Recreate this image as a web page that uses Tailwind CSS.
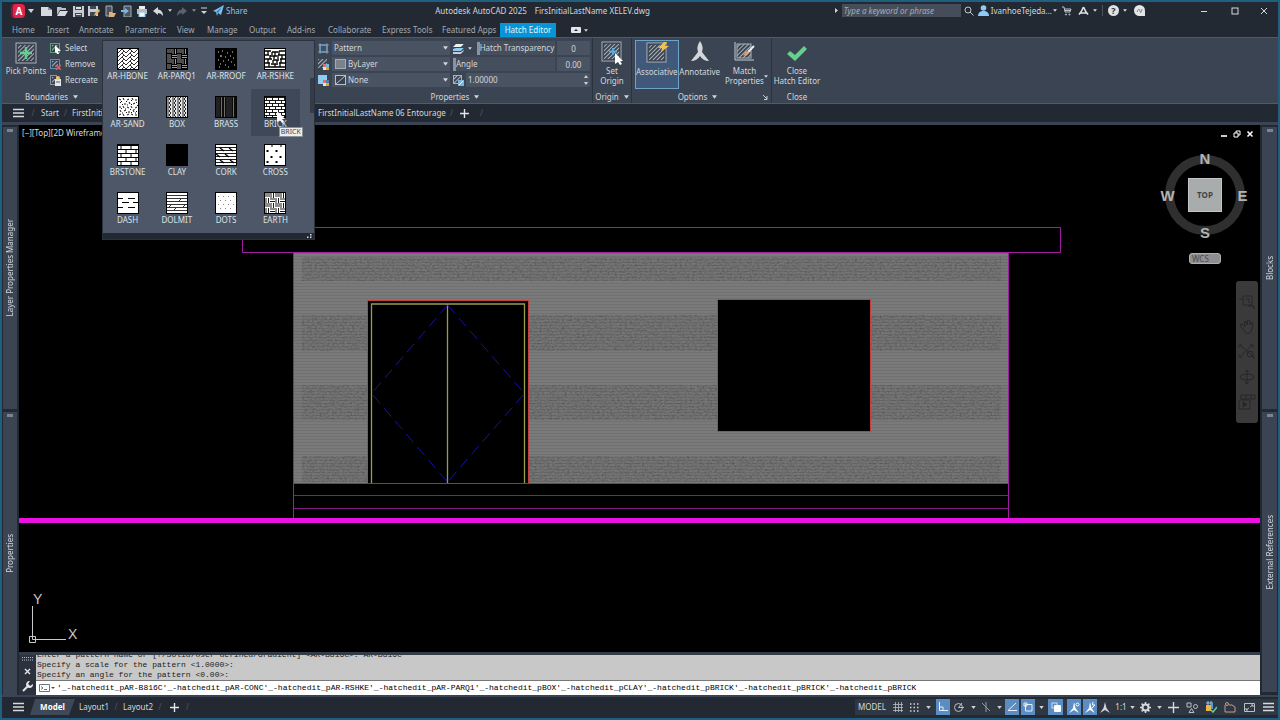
<!DOCTYPE html>
<html lang="en">
<head>
<meta charset="utf-8">
<meta name="viewport" content="width=device-width, initial-scale=1">
<title>Autodesk AutoCAD 2025</title>
<script src="https://cdn.jsdelivr.net/npm/@tailwindcss/browser@4"></script>
</head>
<body class="flex h-screen flex-col overflow-hidden border-x-2 border-t-2 border-[#1f6080] bg-[#222933] font-['Noto_Sans',sans-serif] text-[8px] leading-[10px] text-[#d3d7dc]">

<!-- shared symbols -->
<svg class="absolute h-0 w-0" aria-hidden="true">
  <defs>
    <symbol id="down" viewBox="0 0 6 4"><path d="M0 0H6L3 4Z" fill="#d0d4da"/></symbol>
    <pattern id="diag" width="3" height="3" patternUnits="userSpaceOnUse" patternTransform="rotate(45)"><path d="M0 0V3" stroke="#aab1ba" stroke-width="2"/></pattern>
    <symbol id="hatch" viewBox="0 0 22 22"><rect x="1" y="1" width="20" height="20" fill="#3b4350" stroke="#aab1ba"/><rect x="3" y="3" width="16" height="16" fill="url(#diag)"/></symbol>
    <symbol id="cursor" viewBox="0 0 8 12"><path d="M0 0L8 8H5L7 11L5 12L3 9L0 11Z" fill="#fff"/></symbol>
  </defs>
</svg>

<!-- title bar -->
<header class="flex h-[19px] shrink-0 items-center pb-[2px] pl-[9px]">
  <nav class="flex items-center" aria-label="Quick access">
    <button class="flex h-[14px] w-[14px] items-center justify-center rounded-sm border-l-2 border-[#8f1733] bg-[#e2234c] text-[10px] font-bold text-white" aria-label="Application menu">A</button>
    <svg class="ml-[3px] w-[6px] h-[4px]"><use href="#down"/></svg>
    <button class="ml-[4px] w-4" aria-label="New"><svg class="mx-auto h-3 w-3" viewBox="0 0 12 12"><path d="M1 2H8L12 5V11H1Z" fill="#d6d9dd"/><path d="M8 2V5H12" fill="#8b929c"/></svg></button>
    <button class="w-4" aria-label="Open"><svg class="mx-auto h-3 w-3" viewBox="0 0 12 12"><path d="M1 10V2H5L6 3H10V5H4Z" fill="#b9bfc6"/><path d="M4 6H12L9 11H1Z" fill="#d6d9dd"/></svg></button>
    <button class="w-4" aria-label="Save"><svg class="mx-auto h-3 w-3" viewBox="0 0 12 12"><path d="M1 1H12V12H1Z" fill="#c9cdd2"/><path d="M3 1H10V5H3ZM3 8H10V12H3Z" fill="#3f4651"/><path d="M4 2H9V4H4ZM4 9H9V10H4Z" fill="#dfe2e5"/></svg></button>
    <button class="w-4" aria-label="Save as"><svg class="mx-auto h-3 w-3" viewBox="0 0 12 12"><path d="M0 1H10V11H0Z" fill="#c9cdd2"/><path d="M2 1H8V4H2ZM2 7H8V11H2Z" fill="#3f4651"/><path d="M6 11L7 8L11 4L12 6L8 10Z" fill="#e8b35e"/></svg></button>
    <button class="w-4" aria-label="Open from mobile"><svg class="mx-auto h-3 w-3" viewBox="0 0 12 12"><path d="M2 1H8V11H2Z" fill="#4a5260" stroke="#a9afb7"/><path d="M5 11V7H8L9 8H12L10 12H5Z" fill="#e0b27a"/></svg></button>
    <button class="w-4" aria-label="Save to mobile"><svg class="mx-auto h-3 w-3" viewBox="0 0 12 12"><path d="M4 1H11V12H4Z" fill="#4a5260" stroke="#a9afb7"/><path d="M1 5H5V3L9 6L5 9V7H1Z" fill="#6fb9ec"/></svg></button>
    <button class="w-4" aria-label="Plot"><svg class="mx-auto h-3 w-3" viewBox="0 0 12 12"><path d="M3 1H9V4H3Z" fill="#eceef0"/><path d="M1 4H11V9H1Z" fill="#b7bcc3"/><path d="M3 7H9V12H3Z" fill="#f4f5f6" stroke="#8cc4ec"/></svg></button>
    <button class="w-4" aria-label="Undo"><svg class="mx-auto h-3 w-3" viewBox="0 0 12 12"><path d="M1 6L6 2V4.500Q11 5 11 11Q9 8 6 8V10Z" fill="#d6d9dd"/></svg></button>
    <svg class="mx-[2px] h-[3px] w-[4px]"><use href="#down"/></svg>
    <button class="w-4" aria-label="Redo"><svg class="mx-auto h-3 w-3" viewBox="0 0 12 12"><path d="M11 6L6 2V4.500Q1 5 1 11Q3 8 6 8V10Z" fill="#5a626e"/></svg></button>
    <svg class="mx-[2px] h-[3px] w-[4px] opacity-60"><use href="#down"/></svg>
    <button class="w-3" aria-label="Customize"><svg class="mx-auto h-2 w-[6px]" viewBox="0 0 6 8"><path d="M0 1H6" stroke="#d0d4da"/><path d="M0 4H6L3 7Z" fill="#d0d4da"/></svg></button>
    <a href="#" class="ml-[3px] flex items-center gap-[2px] text-[#8fc4e8]"><svg class="h-[11px] w-[11px]" viewBox="0 0 11 11"><path d="M0 6L11 0L8 10L5 8L4 11L3 7Z" fill="#7cc0ee"/><path d="M3 7L9 2L5 8" fill="#3d7fae"/></svg>Share</a>
  </nav>
  <div class="flex min-w-0 flex-1 justify-center gap-2 pl-[3px] text-[#d3d7dc]"><span>Autodesk AutoCAD 2025</span><span>FirsInitialLastName XELEV.dwg</span></div>
  <div class="flex items-center">
    <svg class="mr-[4px] h-[5px] w-[3px]" viewBox="0 0 3 5"><path d="M0 0L3 2.500L0 5Z" fill="#d0d4da"/></svg>
    <input aria-label="Search" placeholder="Type a keyword or phrase" class="h-[13px] w-[119px] bg-[#454d5b] px-[2px] text-[8px] italic placeholder:text-[#a6acb5]">
    <button class="w-[17px]" aria-label="Find"><svg class="mx-auto h-[10px] w-[10px]" viewBox="0 0 10 10" fill="none" stroke="#c3c8ce"><circle cx="4" cy="4" r="3"/><path d="M6 6L9.500 9.500"/></svg></button>
    <button class="flex items-center gap-[2px]"><svg class="h-[11px] w-[11px]" viewBox="0 0 11 11" fill="#8ecbf5"><circle cx="5.500" cy="3" r="2.800"/><path d="M0 11Q0 7 4 6H7Q11 7 11 11Z"/></svg>IvanhoeTejeda...</button>
    <svg class="ml-px h-[3px] w-[4px]"><use href="#down"/></svg>
    <button class="ml-[2px] w-4" aria-label="Store"><svg class="mx-auto h-[10px] w-[10px]" viewBox="0 0 10 10" fill="none" stroke="#bfc4ca"><path d="M0 1H2L3 6H8L9 3H3M3 4.500H8"/><circle cx="4" cy="8.500" r=".6"/><circle cx="7.500" cy="8.500" r=".6"/></svg></button>
    <button class="w-4" aria-label="App menu"><svg class="mx-auto h-[10px] w-[11px]" viewBox="0 0 11 10" fill="none" stroke="#dfe2e5" stroke-width="1.600"><path d="M5.500 1L3 6L1 8.500M5.500 1L8 6L10 8.500M3 7H8"/></svg></button>
    <svg class="mx-[2px] h-[3px] w-[4px]"><use href="#down"/></svg>
    <span class="ml-[3px] mr-[5px] h-[11px] w-px bg-[#4a515c]"></span>
    <button class="flex h-[11px] w-[11px] items-center justify-center rounded-full bg-[#dfe2e5] text-[9px] font-bold text-[#2b323d]" aria-label="Help">?</button>
    <svg class="mx-[4px] h-[3px] w-[4px]"><use href="#down"/></svg>
    <button class="w-4" aria-label="Assistant"><svg class="mx-auto h-[11px] w-[11px]" viewBox="0 0 11 11"><path d="M5.500 0A5.500 5.500 0 0 1 11 5.500V11H5.500A5.500 5.500 0 0 1 5.500 0Z" fill="#e3e5e8"/><path d="M3 7Q5 2 6 6T8 4" fill="none" stroke="#808892"/></svg></button>
    <button class="ml-[41px] w-[31px]" aria-label="Minimize"><svg class="mx-auto h-2 w-2" viewBox="0 0 8 8"><path d="M1 4.500H7" stroke="#d6d9dd"/></svg></button>
    <button class="w-[31px]" aria-label="Maximize"><svg class="mx-auto h-2 w-2" viewBox="0 0 8 8"><rect x="1" y="1" width="6" height="6" fill="none" stroke="#d6d9dd"/></svg></button>
    <button class="w-[28px]" aria-label="Close window"><svg class="mx-auto h-2 w-2" viewBox="0 0 8 8"><path d="M1 1L7 7M7 1L1 7" stroke="#d6d9dd"/></svg></button>
  </div>
</header>

<!-- ribbon tabs -->
<nav class="flex h-4 shrink-0 items-end pl-[10px] text-[#a3a9b2]" aria-label="Ribbon tabs">
  <button class="h-[14px] w-[35px] text-left">Home</button><button class="h-[14px] w-[32px] text-left">Insert</button><button class="h-[14px] w-[46px] text-left">Annotate</button><button class="h-[14px] w-[52px] text-left">Parametric</button><button class="h-[14px] w-[30px] text-left">View</button><button class="h-[14px] w-[42px] text-left">Manage</button><button class="h-[14px] w-[38px] text-left">Output</button><button class="h-[14px] w-[41px] text-left">Add-ins</button><button class="h-[14px] w-[54px] text-left">Collaborate</button><button class="h-[14px] w-[60px] whitespace-nowrap text-left">Express Tools</button><button class="h-[14px] w-[58px] whitespace-nowrap text-left">Featured Apps</button>
  <button class="h-[14px] w-[56px] whitespace-nowrap bg-[#0696d7] text-[#e3f3fb]">Hatch Editor</button>
  <button class="ml-[15px] flex h-[14px] items-center gap-[3px]" aria-label="Ribbon display"><svg class="h-[6px] w-[10px]" viewBox="0 0 10 6"><rect width="10" height="6" rx="1" fill="#e3e5e8"/><path d="M3 4L5 2L7 4Z" fill="#222933"/></svg><svg class="h-[3px] w-[4px]"><use href="#down"/></svg></button>
</nav>

<!-- ribbon -->
<section class="relative flex h-[67px] shrink-0 border-y border-[#2d6781] bg-[#3b4453]" aria-label="Hatch Editor">
  <div class="flex w-[99px] flex-col">
    <div class="flex h-[54px]">
      <button class="flex w-[48px] flex-col items-center justify-start whitespace-nowrap pt-[4px]"><span class="relative mb-[2px]"><svg class="h-[22px] w-[22px]"><use href="#hatch"/></svg><svg class="absolute inset-0 h-[22px] w-[22px]" viewBox="0 0 22 22"><path d="M11 5V17M5 11H17" stroke="#5fd38d" stroke-width="2.400"/></svg></span>Pick Points</button>
      <div class="flex flex-col pt-[2px]">
        <button class="flex h-4 items-center gap-[4px]"><svg class="h-[11px] w-[11px]" viewBox="0 0 11 11"><rect x=".5" y=".5" width="9" height="9" fill="#33483f" stroke="#5f9e7b"/><rect x="2" y="2" width="6" height="6" fill="url(#diag)"/><path d="M5 2L11 8H8L9 11H7L6 9L5 10Z" fill="#fff"/></svg>Select</button>
        <button class="flex h-4 items-center gap-[4px]"><svg class="h-[11px] w-[11px]" viewBox="0 0 11 11"><rect x=".5" y=".5" width="9" height="9" fill="#34465a" stroke="#6d8ba6"/><rect x="2" y="2" width="6" height="6" fill="url(#diag)"/><path d="M6 6L11 11M11 6L6 11" stroke="#e25c56" stroke-width="1.500"/></svg>Remove</button>
        <button class="flex h-4 items-center gap-[4px]"><svg class="h-[11px] w-[11px]" viewBox="0 0 11 11"><rect x=".5" y=".5" width="6" height="9" fill="#39424f" stroke="#8d96a2"/><rect x="2" y="2" width="3" height="6" fill="url(#diag)"/><path d="M5 4H11V11H5Z" fill="#e4e6e8"/><circle cx="8" cy="3" r="2" fill="#f0c36a"/><path d="M6 7H10" stroke="#57606d"/></svg>Recreate</button>
      </div>
    </div>
    <div class="flex items-center justify-center gap-[5px]">Boundaries<svg class="h-[4px] w-[5px]"><use href="#down"/></svg></div>
  </div>

  <div class="ml-[213px] flex w-[279px] flex-col border-r border-[#2c333f] pl-[4px] pt-[2px]">
    <div class="grid h-[52px] auto-rows-[16px] grid-cols-[132px_137px] gap-x-[3px]">
      <div class="flex h-4 items-center gap-[3px]"><svg class="h-[11px] w-[11px] shrink-0" viewBox="0 0 11 11"><rect x="2" y="2" width="7" height="7" fill="#33546b" stroke="#7fb4d8"/><path d="M2 0V11M9 0V11M0 2H11M0 9H11" stroke="#8fa6b8" stroke-width=".7"/></svg>
        <label class="relative flex h-[14px] flex-1 items-center bg-[#4a5362]"><select aria-label="Hatch type" class="w-full appearance-none bg-transparent pl-[2px]"><option>Pattern</option></select><svg class="pointer-events-none absolute right-[2px] h-[4px] w-[5px]"><use href="#down"/></svg></label></div>
      <div class="flex h-4 items-center"><svg class="h-[11px] w-[11px]" viewBox="0 0 11 11"><path d="M3 1H11L8 4H0Z" fill="#eef0f2"/><path d="M0 6L3 5H11L8 8H0Z" fill="#8ecbf5"/><path d="M0 9H8L11 7V8L8 11H0Z" fill="#c9cdd2"/></svg><svg class="ml-[4px] h-[3px] w-[4px]"><use href="#down"/></svg>
        <div class="ml-[5px] flex h-[14px] w-[80px] items-center whitespace-nowrap bg-[#454e5c]"><span class="h-[13px] w-[3px] shrink-0 bg-[#8b929d]"></span>Hatch Transparency</div>
        <input aria-label="Hatch transparency" value="0" class="ml-[2px] h-[14px] w-[33px] bg-[#4a5362] text-center"></div>
      <div class="flex h-4 items-center gap-[3px]"><svg class="h-[11px] w-[11px] shrink-0" viewBox="0 0 11 11"><rect width="9" height="9" fill="url(#diag)"/><path d="M5 5H8V8H5Z" fill="#e46b5e"/><path d="M8 5H11V8H8Z" fill="#7fb4d8"/><path d="M5 8H8V11H5Z" fill="#dfe2e5"/><path d="M8 8H11V11H8Z" fill="#d9a441"/></svg>
        <label class="relative flex h-[14px] flex-1 items-center gap-[2px] bg-[#4a5362] pl-[3px]"><span class="h-[10px] w-[11px] shrink-0 border border-[#a5abb3] bg-[#7b8289]"></span><select aria-label="Hatch color" class="w-full appearance-none bg-transparent"><option>ByLayer</option></select><svg class="pointer-events-none absolute right-[2px] h-[4px] w-[5px]"><use href="#down"/></svg></label></div>
      <div class="flex h-4 items-center"><div class="flex h-[14px] w-[102px] items-center bg-[#454e5c]"><span class="h-[13px] w-[3px] bg-[#8b929d]"></span>Angle</div>
        <input aria-label="Angle" value="0.00" class="ml-[2px] h-[14px] w-[33px] bg-[#4a5362] text-center"></div>
      <div class="flex h-4 items-center gap-[3px]"><svg class="h-[11px] w-[11px] shrink-0" viewBox="0 0 11 11"><rect width="9" height="9" fill="#8ecbf5"/><path d="M5 5H8V8H5Z" fill="#e46b5e"/><path d="M8 5H11V8H8Z" fill="#4b83aa"/><path d="M5 8H8V11H5Z" fill="#dfe2e5"/><path d="M8 8H11V11H8Z" fill="#d9a441"/></svg>
        <label class="relative flex h-[14px] flex-1 items-center gap-[2px] bg-[#4a5362] pl-[3px]"><svg class="h-[10px] w-[11px] shrink-0" viewBox="0 0 11 10" fill="#39424f" stroke="#b9bfc6"><rect x=".5" y=".5" width="10" height="9"/><path d="M1 9L10 1"/></svg><select aria-label="Background color" class="w-full appearance-none bg-transparent"><option>None</option></select><svg class="pointer-events-none absolute right-[2px] h-[4px] w-[5px]"><use href="#down"/></svg></label></div>
      <div class="flex h-4 items-center"><svg class="h-[11px] w-[11px]" viewBox="0 0 11 11"><rect x=".5" y=".5" width="8" height="8" fill="url(#diag)" stroke="#aab1ba"/><path d="M5 5H11V11H5Z" fill="#7fb4d8"/><path d="M6 10L10 6" stroke="#fff"/></svg>
        <div class="ml-[2px] flex h-[14px] w-[124px] items-center bg-[#4a5362]"><input aria-label="Hatch scale" value="1.00000" class="min-w-0 flex-1 bg-transparent pl-[2px]"><svg class="mr-px h-3 w-[6px]" viewBox="0 0 6 12"><path d="M1 4L3 1L5 4ZM1 8H5L3 11Z" fill="#d0d4da"/></svg></div></div>
    </div>
    <div class="flex items-center justify-center gap-[5px]">Properties<svg class="h-[4px] w-[5px]"><use href="#down"/></svg></div>
  </div>

  <div class="flex w-[39px] flex-col items-center border-r border-[#2c333f]">
    <button class="flex h-[54px] flex-col items-center justify-start pt-[3px]"><span class="relative mb-1"><svg class="h-[21px] w-[21px]"><use href="#hatch"/></svg><svg class="absolute inset-0 h-[21px] w-[21px]" viewBox="0 0 21 21"><path d="M12 7V14M8 10.500H16" stroke="#5ba8e0" stroke-width="2"/></svg><svg class="absolute -bottom-[3px] -right-px h-3 w-2"><use href="#cursor"/></svg></span>Set<br>Origin</button>
    <div class="flex items-center gap-[5px]">Origin<svg class="h-[4px] w-[5px]"><use href="#down"/></svg></div>
  </div>

  <div class="flex w-[140px] flex-col border-r border-[#2c333f] px-[3px]">
    <div class="flex h-[54px] pt-[2px]">
      <button class="flex h-[49px] w-[44px] flex-col items-center justify-start border border-[#6da3c8] bg-[#40597a] pt-px" aria-pressed="true"><span class="relative mb-1"><svg class="h-[21px] w-[21px]"><use href="#hatch"/></svg><svg class="absolute -right-[2px] top-0 h-[10px] w-[11px]" viewBox="0 0 11 10"><path d="M6 0L0 6H4L3 10L11 4H7L9 0Z" fill="#f2c14e"/></svg></span>Associative</button>
      <button class="flex w-[43px] flex-col items-center justify-start pt-px"><svg class="mb-[5px] h-[21px] w-[20px]" viewBox="0 0 20 21"><path d="M10 0Q14 6 12 11L19 20Q13 20 10 15Q7 20 1 20L8 11Q6 6 10 0Z" fill="#d3d7dc"/></svg>Annotative</button>
      <button class="relative flex w-[48px] flex-col items-center justify-start pt-px"><span class="relative mb-1"><svg class="h-[21px] w-[21px]" viewBox="0 0 21 21"><rect x="3" y="3" width="14" height="14" fill="url(#diag)" stroke="#aab1ba"/><path d="M1 1V19H20" fill="none" stroke="#c9cdd2"/><path d="M20 5L14 11" stroke="#eef0f2" stroke-width="2"/><path d="M14 10Q16 12 13 14Q11 15 9 14Q11 13 11 11Z" fill="#e0a070"/></svg></span>Match<br>Properties<svg class="absolute bottom-[14px] right-0 h-[3px] w-[4px]"><use href="#down"/></svg></button>
    </div>
    <div class="relative flex items-center justify-center gap-[5px] pr-[8px]">Options<svg class="h-[4px] w-[5px]"><use href="#down"/></svg><svg class="absolute right-0 h-[5px] w-[5px]" viewBox="0 0 5 5" fill="none" stroke="#c9cdd2"><path d="M0 0L4 4M4 1V4.500H1"/></svg></div>
  </div>

  <div class="flex w-[50px] flex-col items-center whitespace-nowrap">
    <button class="flex h-[54px] flex-col items-center justify-start pt-[4px]"><svg class="mb-[3px] h-[21px] w-[22px]" viewBox="0 0 22 21"><path d="M1 12L4 9L9 13L18 4L21 7L9 19Z" fill="#68cf8e"/></svg>Close<br>Hatch Editor</button>
    <div>Close</div>
  </div>

  <!-- pattern gallery drop-down -->
  <div class="absolute left-[100px] top-[2px] z-10 w-[213px] border border-[#2b323d] bg-[#4d5767]">
    <div class="grid w-[197px] grid-cols-4 whitespace-nowrap text-center text-[#dfe2e5] [&_button]:justify-start">
      <button class="flex h-12 flex-col items-center pt-[7px]"><svg class="mb-px h-[22px] w-[22px] border border-black" viewBox="0 0 20 20"><defs><pattern id="hb" width="8" height="4" patternUnits="userSpaceOnUse"><path d="M0 4L4 0L8 4M4 4L6 2" stroke="#000" stroke-width=".8" fill="none"/></pattern></defs><rect width="20" height="20" fill="#fff"/><rect width="20" height="20" fill="url(#hb)"/></svg>AR-HBONE</button>
      <button class="flex h-12 flex-col items-center pt-[7px]"><svg class="mb-px h-[22px] w-[22px] border border-black" viewBox="0 0 20 20"><defs><pattern id="pq" width="10" height="10" patternUnits="userSpaceOnUse"><path d="M0 1H5M0 3H5M6 0V5M8.500 0V5M5 6.500H10M5 8.500H10M1 5V10M3 5V10" stroke="#ddd" stroke-width=".7"/></pattern></defs><rect width="20" height="20"/><rect width="20" height="20" fill="url(#pq)"/></svg>AR-PARQ1</button>
      <button class="flex h-12 flex-col items-center pt-[7px]"><svg class="mb-px h-[22px] w-[22px] border border-black" viewBox="0 0 20 20"><rect width="20" height="20"/><path d="M2 3h1M6 2h1M11 4h1M16 3h1M4 7h2M9 8h1M14 7h1M17 9h1M2 11h1M7 12h1M12 11h1M15 13h1M4 15h1M9 16h1M18 16h1M12 18h1M3 18h1" stroke="#ddd"/></svg>AR-RROOF</button>
      <button class="flex h-12 flex-col items-center pt-[7px]"><svg class="mb-px h-[22px] w-[22px] border border-black" viewBox="0 0 20 20"><rect width="20" height="20" fill="#fff"/><path d="M0 2H6M7 3H13M14 2H20M0 6H4M5 7H12M13 6H20M0 10H7M8 11H14M15 10H20M0 14H5M6 15H13M14 14H20M0 18H20M3 2V6M7 3V6M10 3V7M14 2V6M5 6V10M9 7V10M13 6V10M17 6V10M3 10V14M8 11V14M12 11V14M16 10V14M4 14V18M10 15V18M15 14V18" stroke="#000" stroke-width="1.300"/></svg>AR-RSHKE</button>

      <button class="flex h-12 flex-col items-center pt-[7px]"><svg class="mb-px h-[22px] w-[22px] border border-black" viewBox="0 0 20 20"><rect width="20" height="20" fill="#fff"/><path d="M1 2l2 1M5 1l1 2M9 3l2-1M14 1l1 2M17 3l2 0M2 6l1-1M6 7l2 0M11 5l1 2M15 7l2-1M1 10l2 0M5 9l1 2M9 10l2 1M13 9l1 2M17 11l2-1M2 13l1 2M6 14l2-1M10 15l2 0M15 13l1 2M18 15l1-1M1 18l2-1M5 17l1 2M9 18l2-1M13 17l2 1M17 18l2 0M3 4l1 1M8 5l1-1M13 3l1 1M18 5l1 1M4 8l1-1M9 8l1 0M13 8l1-1M19 8l1 1M3 12l1-1M7 12l1 0M12 12l1 1M16 12l0 1M4 16l1 0M8 16l1-1M13 15l1 1M17 16l1 0" stroke="#111"/></svg>AR-SAND</button>
      <button class="flex h-12 flex-col items-center pt-[7px]"><svg class="mb-px h-[22px] w-[22px] border border-black" viewBox="0 0 20 20"><defs><pattern id="bx" width="5" height="4" patternUnits="userSpaceOnUse"><path d="M1 0V4M4 0L2 2L4 4" stroke="#111" fill="none" stroke-width=".9"/></pattern></defs><rect width="20" height="20" fill="#e8e8e8"/><rect width="20" height="20" fill="url(#bx)"/></svg>BOX</button>
      <button class="flex h-12 flex-col items-center pt-[7px]"><svg class="mb-px h-[22px] w-[22px] border border-black" viewBox="0 0 20 20"><rect width="20" height="20" fill="#0b0b0b"/><path d="M1 0V20M3 0V20M11 0V20M13 0V20M15 0V20" stroke="#444" stroke-width=".8"/><path d="M5.500 0V20M8.500 0V20M17.500 0V20" stroke="#999" stroke-width=".7"/></svg>BRASS</button>
      <button class="relative flex h-[47px] flex-col items-center bg-[#3f4857] pt-[7px]"><svg class="mb-px h-[22px] w-[22px] border border-black" viewBox="0 0 20 20"><defs><pattern id="bk" width="6" height="6" patternUnits="userSpaceOnUse"><path d="M0 .5H6M0 3.500H6M1.500 .5V3.500M4.500 3.500V6.500" stroke="#000" stroke-width=".9"/></pattern></defs><rect width="20" height="20" fill="#fff"/><rect width="20" height="20" fill="url(#bk)"/></svg>BRICK
        <svg class="absolute left-[26px] top-[22px] h-3 w-2"><use href="#cursor"/></svg>
        <span role="tooltip" class="absolute left-[28px] top-[38px] z-10 border border-[#8a8f96] bg-[#eceded] px-px text-[7px] leading-[8px] text-[#40454d]">BRICK</span></button>

      <button class="flex h-12 flex-col items-center pt-[7px]"><svg class="mb-px h-[22px] w-[22px] border border-black" viewBox="0 0 20 20"><defs><pattern id="bs" width="10" height="8" patternUnits="userSpaceOnUse"><path d="M0 .5H10M0 4.500H10M3 .5V4.500M8 4.500V8.500" stroke="#000"/></pattern></defs><rect width="20" height="20" fill="#fff"/><rect width="20" height="20" fill="url(#bs)"/></svg>BRSTONE</button>
      <button class="flex h-12 flex-col items-center pt-[7px]"><svg class="mb-px h-[22px] w-[22px] border border-black" viewBox="0 0 20 20"><rect width="20" height="20"/></svg>CLAY</button>
      <button class="flex h-12 flex-col items-center pt-[7px]"><svg class="mb-px h-[22px] w-[22px] border border-black" viewBox="0 0 20 20"><rect width="20" height="20" fill="#fff"/><path d="M0 2.500H20M0 5.500H20M0 8.500H20M0 11.500H20M0 14.500H20M0 17.500H20" stroke="#000" stroke-width=".9"/><path d="M4 3L8 6M13 3L17 6M9 9L13 12M0 9L4 12M14 15L18 18M4 15L8 18" stroke="#000" stroke-width="1.300"/></svg>CORK</button>
      <button class="flex h-12 flex-col items-center pt-[7px]"><svg class="mb-px h-[22px] w-[22px] border border-black" viewBox="0 0 20 20"><rect width="20" height="20" fill="#fff"/><path d="M1 6h3M2.500 5v2M10 6h3M11.500 5v2M5 12h3M6.500 11v2M14 12h3M15.500 11v2M1 17h3M2.500 16v2M10 17h3M11.500 16v2M6 1h2M15 1h2" stroke="#000"/></svg>CROSS</button>

      <button class="flex h-12 flex-col items-center pt-[7px]"><svg class="mb-px h-[22px] w-[22px] border border-black" viewBox="0 0 20 20"><rect width="20" height="20" fill="#fff"/><path d="M0 5.500H5M10 5.500H17M4 9.500H11M15 9.500H20M0 14.500H5M10 14.500H17" stroke="#000"/></svg>DASH</button>
      <button class="flex h-12 flex-col items-center pt-[7px]"><svg class="mb-px h-[22px] w-[22px] border border-black" viewBox="0 0 20 20"><rect width="20" height="20" fill="#fff"/><path d="M0 2.500H20M0 5.500H20M0 8.500H20M0 11.500H20M0 14.500H20M0 17.500H20M14 6L12 8M4 12L2 14M18 12L16 14M9 15L7 17" stroke="#000" stroke-width=".8"/></svg>DOLMIT</button>
      <button class="flex h-12 flex-col items-center pt-[7px]"><svg class="mb-px h-[22px] w-[22px] border border-black" viewBox="0 0 20 20"><rect width="20" height="20" fill="#fff"/><path d="M2 3.500h1M7 3.500h1M12 3.500h1M17 3.500h1M4 7.500h1M9 7.500h1M14 7.500h1M2 11.500h1M7 11.500h1M12 11.500h1M17 11.500h1M4 15.500h1M9 15.500h1M14 15.500h1" stroke="#888"/></svg>DOTS</button>
      <button class="flex h-12 flex-col items-center pt-[7px]"><svg class="mb-px h-[22px] w-[22px] border border-black" viewBox="0 0 20 20"><defs><pattern id="ea" width="10" height="10" patternUnits="userSpaceOnUse"><path d="M0 1H5M0 3H5M6 0V5M8.500 0V5M5 6H10M5 8.500H10M1 5V10M3.500 5V10" stroke="#000" stroke-width=".9"/></pattern></defs><rect width="20" height="20" fill="#fff"/><rect width="20" height="20" fill="url(#ea)"/></svg>EARTH</button>
    </div>
    <div class="flex h-[6px] items-center justify-end bg-[#222933] pr-[2px]"><svg class="h-[4px] w-[5px]" viewBox="0 0 5 4"><path d="M3 0h1.500v1.500h-1.500zM0 2.500h1.500v1.500h-1.500zM3 2.500h1.500v1.500h-1.500z" fill="#d6d9dd"/></svg></div>
    <span class="absolute right-0 top-[37px] h-[35px] w-[4px] bg-[#343c49]"></span>
  </div>
</section>

<!-- drawing tabs -->
<nav class="flex h-[18px] shrink-0 items-center text-[#d3d7dc]" aria-label="Drawings">
  <button class="ml-[11px] w-3" aria-label="Drawing list"><svg class="h-[10px] w-[11px]" viewBox="0 0 11 10"><path d="M0 1.500H11M0 5H11M0 8.500H11" stroke="#d6d9dd" stroke-width="1.300"/></svg></button>
  <span class="w-4 text-center text-[#4f5763]">/</span><button class="w-[18px]">Start</button><span class="w-[13px] text-center text-[#4f5763]">/</span>
  <button class="w-[246px] overflow-hidden text-left">FirstInitialLastName</button>
  <button class="w-[132px] whitespace-nowrap text-left">FirstInitialLastName 06 Entourage</button><span class="w-[10px] text-[#4f5763]">/</span>
  <button class="w-[20px]" aria-label="New drawing"><svg class="h-[9px] w-[9px]" viewBox="0 0 9 9"><path d="M4.500 0V9M0 4.500H9" stroke="#e3e5e8" stroke-width="1.400"/></svg></button><span class="text-[#4f5763]">/</span>
</nav>
<div class="h-[3px] shrink-0 bg-[#3b4453]"></div>

<main class="flex min-h-0 flex-1">
  <!-- left palettes -->
  <aside class="flex w-[17px] shrink-0 flex-col gap-[3px] pl-px pr-[2px] pt-[2px]">
    <button class="relative flex h-[282px] items-center justify-center bg-[#3b4453]"><span class="absolute top-[2px] h-[3px] w-[6px] bg-[#7b838f]"></span><span class="rotate-180 [writing-mode:vertical-rl]">Layer Properties Manager</span></button>
    <button class="relative flex min-h-0 flex-1 items-center justify-center bg-[#3b4453]"><span class="absolute top-[2px] h-[3px] w-[6px] bg-[#7b838f]"></span><span class="rotate-180 [writing-mode:vertical-rl]">Properties</span></button>
  </aside>

  <div class="flex min-w-0 flex-1 flex-col">
    <!-- model space canvas -->
    <div class="relative min-h-0 flex-1 overflow-hidden bg-black">
      <svg class="absolute inset-0 h-full w-full" role="img" aria-label="House elevation drawing">
        <defs>
          <pattern id="courses" width="8" height="3" patternUnits="userSpaceOnUse"><rect width="8" height="3" fill="#7a7a7a"/><path d="M0 1.500H8" stroke="#707070"/></pattern>
          <filter id="grain" x="0" y="0" width="1" height="1"><feTurbulence type="fractalNoise" baseFrequency=".4 .6" numOctaves="2" seed="4"/><feColorMatrix values="0 0 0 0 0  0 0 0 0 0  0 0 0 0 0  1.400 0 0 0 -.55"/></filter>
        </defs>
        <g transform="translate(-19 -125)" fill="none">
          <path d="M294 253H1009V483H294Z" fill="url(#courses)"/>
          <g filter="url(#grain)" opacity=".3" fill="#000"><path d="M302 257H1001V281H302Z"/></g>
          <g filter="url(#grain)" opacity=".3" fill="#000"><path d="M302 315H1001V351H302Z"/></g>
          <g filter="url(#grain)" opacity=".3" fill="#000"><path d="M302 385H1001V420H302Z"/></g>
          <g filter="url(#grain)" opacity=".3" fill="#000"><path d="M302 456H1001V482H302Z"/></g>
          <path d="M302 257H1009V281H302ZM294 315H1009V351H294ZM294 385H1009V420H294ZM302 456H1009V482H302Z" fill="#000" opacity=".03"/>
          <g stroke="#a31aa3"><path d="M242.500 227.500H1060.500V252.500H242.500ZM293.500 253V518M1008.500 253V518M293 483.500H1009"/><path d="M293 495.500H1009M293 508.500H1009" stroke="#861a86"/></g>
          <path d="M19 520.500H1260" stroke="#ea12e2" stroke-width="5"/>
          <path d="M367.500 483V300.500H528.500V483" fill="#000" stroke="#c4403c"/>
          <path d="M371.500 483V304H524.500V483M447.500 304V483" stroke="#9a9b45" stroke-width="1.300"/>
          <path d="M447.500 305L371.500 393.500L447.500 482M447.500 305L524.500 393.500L447.500 482" stroke="#1515a0" stroke-dasharray="11 6"/>
          <path d="M717.500 299.500H870.500V431.500H717.500Z" fill="#000" stroke="#c4403c"/>
          <path d="M32.500 635V606M36 639.500H66M29.500 636.500H35.500V642.500H29.500ZM32.500 639.500V635M32.500 639.500H36" stroke="#c9c9c9"/>
          <g fill="#c9c9c9" font-size="14" font-family="Liberation Sans, sans-serif"><text x="33" y="604">Y</text><text x="68" y="639">X</text></g>
        </g>
      </svg>
      <div class="absolute left-[3px] top-[3px] whitespace-nowrap text-[#d6d9dd]">[−][Top][2D Wireframe]</div>
      <div class="absolute right-[6px] top-[5px] flex gap-[5px]">
        <button aria-label="Minimize drawing"><svg class="h-2 w-2" viewBox="0 0 8 8"><path d="M1 6H7" stroke="#fff" stroke-width="1.600"/></svg></button>
        <button aria-label="Restore drawing"><svg class="h-2 w-2" viewBox="0 0 8 8" fill="none" stroke="#fff"><path d="M1 3H5V7H1ZM3 3V1H7V5H5"/></svg></button>
        <button aria-label="Close drawing"><svg class="h-2 w-2" viewBox="0 0 8 8"><path d="M1.500 1.500L6.500 6.500M6.500 1.500L1.500 6.500" stroke="#fff" stroke-width="1.600"/></svg></button>
      </div>
      <div class="absolute right-[9px] top-[25px] grid h-[90px] w-[92px] grid-cols-[17px_1fr_17px] grid-rows-[16px_1fr_16px] place-items-center font-['Liberation_Sans',sans-serif] text-[15px] font-bold leading-none text-[#b3b3b3]">
        <svg class="absolute left-[6px] top-[5px] h-[80px] w-[80px]" viewBox="0 0 80 80"><circle cx="40" cy="40" r="35.500" fill="none" stroke="#2f2f2f" stroke-width="9"/></svg>
        <button class="relative col-start-2 row-start-1">N</button>
        <button class="relative col-start-1 row-start-2">W</button>
        <button class="relative col-start-2 row-start-2 h-[34px] w-[34px] border border-[#c4c6c6] bg-[#a9acac] font-['Noto_Sans',sans-serif] text-[8px] text-[#3c4648]">TOP</button>
        <button class="relative col-start-3 row-start-2">E</button>
        <button class="relative col-start-2 row-start-3">S</button>
      </div>
      <button class="absolute right-[39px] top-[128px] h-[11px] w-[32px] rounded-[3px] border border-[#b0b0b3] bg-[#8f8f92] pl-[2px] text-left leading-[8px] text-[#4b4b4e]">WCS</button>
      <div class="absolute right-[2px] top-[156px] flex h-[142px] w-[22px] flex-col items-center justify-between rounded-[3px] bg-[#3a3a3a] px-[2px] pb-[13px] pt-[13px]">
        <button aria-label="Navigation wheel"><svg class="h-4 w-[18px]" viewBox="0 0 18 16" fill="none" stroke="#262626"><path d="M5 2H14V11H5ZM8 5H11V9M1 5H5M14 12L17 15M10 12H16V15"/></svg></button>
        <button aria-label="Pan"><svg class="h-4 w-[18px]" viewBox="0 0 18 16" fill="none" stroke="#262626"><path d="M4 9L2 6L4 5L7 8L6 3L8 2L9 6L10 1L12 2V6L14 3L15 5L13 13L9 15Z"/></svg></button>
        <button aria-label="Zoom extents"><svg class="h-4 w-[18px]" viewBox="0 0 18 16" fill="none" stroke="#262626"><path d="M2 1L16 13M14 1L2 13M1 4V1H4M12 1H15V4M1 10V13H4"/><circle cx="12" cy="10" r="3"/><path d="M14 12L17 15"/></svg></button>
        <button aria-label="Orbit"><svg class="h-4 w-[18px]" viewBox="0 0 18 16" fill="none" stroke="#262626"><path d="M9 1V15M7 3L9 1L11 3M7 13L9 15L11 13"/><ellipse cx="9" cy="8" rx="7" ry="3"/></svg></button>
        <button aria-label="Show motion"><svg class="h-4 w-[18px]" viewBox="0 0 18 16" fill="none" stroke="#262626"><path d="M1 6H12V15H1ZM3 1H17V5H3ZM8 1V5M13 1V5"/><path d="M5 8L9 10.500L5 13Z" fill="#262626"/></svg></button>
      </div>
    </div>

    <!-- command line -->
    <section class="flex h-[43px] shrink-0 border-t-[3px] border-[#343c47] font-['Liberation_Mono',monospace] text-black" aria-label="Command line">
      <div class="flex w-[17px] flex-col items-center justify-between bg-[#2b323d] pb-[3px] pt-[2px]">
        <svg class="h-[4px] w-3" viewBox="0 0 12 4"><path d="M0 .5H12M0 3H12" stroke="#b9bfc6" stroke-dasharray="1 1"/></svg>
        <button aria-label="Close command line"><svg class="block h-[7px] w-[7px]" viewBox="0 0 7 7"><path d="M1 1L6 6M6 1L1 6" stroke="#e3e5e8" stroke-width="1.400"/></svg></button>
        <button aria-label="Customize command line"><svg class="block h-[11px] w-[11px]" viewBox="0 0 11 11"><path d="M1 10L7 4" stroke="#e3e5e8" stroke-width="2"/><path d="M8 0L6 3L8 5L11 3A3.500 3.500 0 1 1 8 0Z" fill="#e3e5e8"/></svg></button>
      </div>
      <div class="flex min-w-0 flex-1 flex-col">
        <div class="flex h-[26px] flex-col justify-end overflow-hidden whitespace-nowrap border-b border-[#777] bg-[#c8c8c8] pl-px text-[#222]"><div>Enter a pattern name or [?/Solid/User defined/Gradient] &lt;AR-B816C&gt;: AR-B816C</div><div>Specify a scale for the pattern &lt;1.0000&gt;:</div><div>Specify an angle for the pattern &lt;0.00&gt;:</div></div>
        <label class="flex flex-1 items-center bg-white pl-[3px]"><svg class="mr-[2px] h-2 w-[16px] shrink-0" viewBox="0 0 16 8"><path d="M.5 .5H10.500V7.500H.5ZM2 2.500L4 4L2 5.500M5 5.500H8" fill="none" stroke="#4b535e" stroke-width=".8"/><path d="M12 3H16L14 5Z" fill="#4b535e"/></svg><input aria-label="Command" class="min-w-0 flex-1 text-[8px]" value="'_-hatchedit_pAR-B816C'_-hatchedit_pAR-CONC'_-hatchedit_pAR-RSHKE'_-hatchedit_pAR-PARQ1'_-hatchedit_pBOX'_-hatchedit_pCLAY'_-hatchedit_pBRICK'_-hatchedit_pBRICK'_-hatchedit_pBRICK"></label>
      </div>
    </section>
  </div>

  <!-- right palettes -->
  <aside class="flex w-[18px] shrink-0 flex-col gap-[3px] pb-[3px] pl-[2px] pr-px pt-[2px]">
    <button class="relative flex h-[282px] items-center justify-center bg-[#3b4453]"><span class="absolute top-[2px] h-[3px] w-[6px] bg-[#7b838f]"></span><span class="rotate-180 [writing-mode:vertical-rl]">Blocks</span></button>
    <button class="relative flex min-h-0 flex-1 items-center justify-center bg-[#3b4453]"><span class="absolute top-[2px] h-[3px] w-[6px] bg-[#7b838f]"></span><span class="rotate-180 [writing-mode:vertical-rl]">External References</span></button>
  </aside>
</main>

<!-- layout tabs and status bar -->
<footer class="flex h-[25px] shrink-0 items-center border-b-2 border-t-2 border-b-[#1c5f86] border-t-[#3b4453] pb-px">
  <button class="ml-[11px]" aria-label="Layout list"><svg class="h-[10px] w-[11px]" viewBox="0 0 11 10"><path d="M0 1.500H11M0 5H11M0 8.500H11" stroke="#d6d9dd" stroke-width="1.300"/></svg></button>
  <button class="ml-[6px] h-4 w-[45px] bg-[#3f4857] font-bold text-white [clip-path:polygon(5px_0,100%_0,calc(100%-6px)_100%,0_100%)]">Model</button>
  <button class="ml-[3px] w-[32px]">Layout1</button><span class="w-[12px] text-center text-[#4f5763]">/</span><button class="w-[32px]">Layout2</button><span class="w-[12px] text-center text-[#4f5763]">/</span>
  <button class="ml-[4px] w-[16px]" aria-label="New layout"><svg class="h-[9px] w-[9px]" viewBox="0 0 9 9"><path d="M4.500 0V9M0 4.500H9" stroke="#e3e5e8" stroke-width="1.400"/></svg></button><span class="text-[#4f5763]">/</span>

  <div class="ml-auto flex h-4 items-center bg-[#2f3743] text-[#d6d9dd] [&_button]:flex [&_button]:h-4 [&_button]:items-center [&_button]:justify-center">
    <button class="w-[34px]">MODEL</button>
    <button class="w-[18px]" aria-label="Grid"><svg class="h-[10px] w-[10px]" viewBox="0 0 10 10"><path d="M2.500 0V10M5.500 0V10M8.500 0V10M0 2.500H10M0 5.500H10M0 8.500H10" stroke="#b9bfc6" stroke-width=".8"/></svg></button>
    <button class="w-[15px]" aria-label="Snap"><svg class="h-[9px] w-[9px]" viewBox="0 0 9 9"><path d="M0 1H9M0 4.500H9M0 8H9" stroke="#d0d4da" stroke-width="1.500" stroke-dasharray="1.500 2"/></svg></button>
    <svg class="ml-[4px] mr-[5px] h-[3px] w-[5px]"><use href="#down"/></svg>
    <button class="w-[14px] bg-[#5b8cc4]" aria-label="Ortho"><svg class="h-[10px] w-[10px]" viewBox="0 0 10 10" fill="none" stroke="#e8f1fa"><path d="M1.500 0V8.500H10M1.500 5H5V8.500"/></svg></button>
    <button class="w-[18px]" aria-label="Polar"><svg class="h-[10px] w-[10px]" viewBox="0 0 10 10" fill="none" stroke="#b9bfc6"><circle cx="4.500" cy="5.500" r="4"/><path d="M4.500 5.500H10M4.500 5.500L8 1"/></svg></button>
    <svg class="mx-[3px] h-[3px] w-[5px]"><use href="#down"/></svg>
    <button class="w-[14px]" aria-label="Isometric"><svg class="h-[10px] w-[10px]" viewBox="0 0 10 10" fill="none" stroke="#949ba5"><path d="M1 1L9 9M5 0V10"/></svg></button>
    <svg class="ml-[4px] mr-[3px] h-[3px] w-[5px]"><use href="#down"/></svg>
    <button class="w-[14px] bg-[#5b8cc4]" aria-label="Object tracking"><svg class="h-[10px] w-[10px]" viewBox="0 0 10 10" fill="none" stroke="#e8f1fa"><path d="M9 1L1 8.500H10"/></svg></button>
    <button class="ml-[2px] w-[14px] bg-[#5b8cc4]" aria-label="Object snap"><svg class="h-[10px] w-[10px]" viewBox="0 0 10 10" fill="none" stroke="#e8f1fa"><path d="M2.500 2.500H9V9H2.500ZM1 1H4V4H1Z"/></svg></button>
    <svg class="mx-[4px] h-[3px] w-[5px]"><use href="#down"/></svg>
    <button class="w-[15px] bg-[#5b8cc4]" aria-label="Selection cycling"><svg class="h-[10px] w-[10px]" viewBox="0 0 10 10"><rect x="1" y="1" width="5" height="5" fill="none" stroke="#cfe0f2"/><rect x="3" y="3" width="7" height="7" rx="1" fill="#fff"/></svg></button>
    <button class="ml-[4px] w-[14px] bg-[#5b8cc4]" aria-label="Annotation visibility"><svg class="h-[11px] w-[11px]" viewBox="0 0 11 11"><path d="M5 0L6.500 6L10 11L5 8L0 11L4 6Z" fill="#fff"/><circle cx="8.500" cy="2.500" r="1.500" fill="none" stroke="#fff"/></svg></button>
    <button class="ml-[2px] w-[14px] bg-[#5b8cc4]" aria-label="Auto scale"><svg class="h-[11px] w-[11px]" viewBox="0 0 11 11"><path d="M5 0L6.500 6L10 11L5 8L0 11L4 6Z" fill="#fff"/><path d="M8 0L7.500 3H10L7 6" fill="none" stroke="#fff"/></svg></button>
    <button class="w-[16px]" aria-label="Annotation scale icon"><svg class="h-[11px] w-[10px]" viewBox="0 0 10 11"><path d="M5 0L6.500 6L10 11L5 8L0 11L3.500 6Z" fill="#d0d4da"/></svg></button>
    <button class="w-[24px] gap-[3px]">1:1<svg class="h-[3px] w-[5px]"><use href="#down"/></svg></button>
    <button class="w-[17px]" aria-label="Workspace"><svg class="h-[11px] w-[11px]" viewBox="0 0 11 11"><circle cx="5.500" cy="5.500" r="3" fill="none" stroke="#d6d9dd" stroke-width="2"/><path d="M5.500 0V2.500M5.500 8.500V11M0 5.500H2.500M8.500 5.500H11M1.600 1.600L3.200 3.200M7.800 7.800L9.400 9.400M9.400 1.600L7.800 3.200M3.200 7.800L1.600 9.400" stroke="#d6d9dd" stroke-width="1.500"/></svg></button>
    <svg class="mx-[3px] h-[3px] w-[5px]"><use href="#down"/></svg>
    <button class="w-[17px]" aria-label="Annotation monitor"><svg class="h-[11px] w-[11px]" viewBox="0 0 11 11"><path d="M5.500 0V11M0 5.500H11" stroke="#d6d9dd" stroke-width="1.400"/></svg></button>
    <button class="w-[19px]" aria-label="Isolate objects"><svg class="h-[11px] w-[12px]" viewBox="0 0 12 11" fill="none" stroke="#b9bfc6"><path d="M1 1H5V5H1ZM3 10.500L5.500 6.500L8 10.500Z"/><circle cx="9.500" cy="4.500" r="2"/></svg></button>
    <button class="w-[19px]" aria-label="Graphics performance"><svg class="h-[12px] w-[12px]" viewBox="0 0 12 12"><path d="M3 0V5M6 0V5M1 2H8" stroke="#8ecbf5"/><path d="M1 4H6V10H1Z" fill="#e8b84e"/><path d="M6 2H8V8H6Z" fill="#5b9bd5"/><path d="M6 9L8 11L12 6" fill="none" stroke="#68cf8e" stroke-width="1.500"/></svg></button>
    <button class="w-[19px]" aria-label="Trusted files"><svg class="h-[11px] w-[12px]" viewBox="0 0 12 11" fill="none" stroke="#c79b85"><path d="M1 3V10H11V5L8 3H5"/><circle cx="3" cy="2" r="1.500"/></svg></button>
    <button class="w-[20px]" aria-label="Full screen"><svg class="h-[9px] w-[11px]" viewBox="0 0 11 9" fill="none" stroke="#b9bfc6"><path d="M.5 .5H10.500V8.500H.5ZM6 4L9 2M9 4V2H7M5 5L2 7M2 5V7H4"/></svg></button>
    <button class="w-[19px]" aria-label="Customization"><svg class="h-[10px] w-[11px]" viewBox="0 0 11 10"><path d="M0 1.500H11M0 5H11M0 8.500H11" stroke="#d6d9dd" stroke-width="1.300"/></svg></button>
  </div>
</footer>
</body>
</html>
